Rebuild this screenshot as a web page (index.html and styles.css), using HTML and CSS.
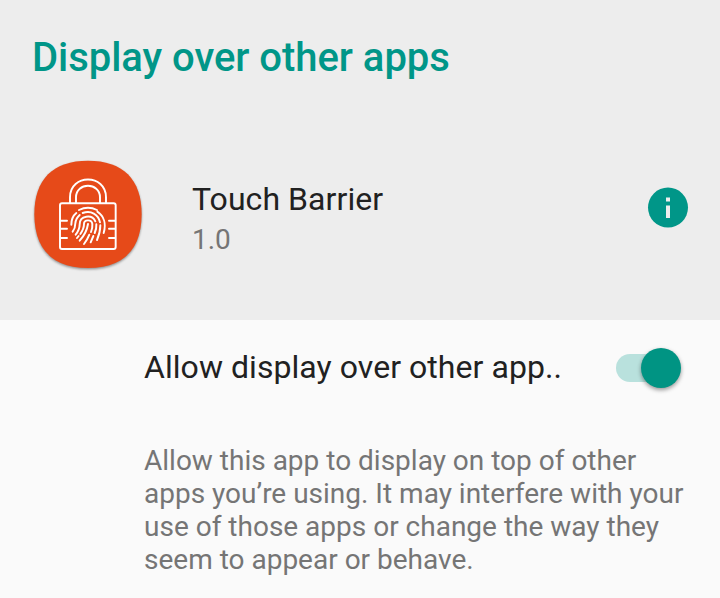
FILE: index.html
```html
<!DOCTYPE html>
<html lang="en">
<head>
<meta charset="utf-8">
<title>Display over other apps</title>
<link rel="stylesheet" href="styles.css">
</head>
<body>
<header class="header">
  <h1 class="title">Display over other apps</h1>
  <div class="app">
    <svg class="app-icon" viewBox="0 0 360 360" aria-hidden="true">
      <path class="tile" d="M180 17C285 17 341 72 341 178C341 284 285 339 180 339C75 339 19 284 19 178C19 72 75 17 180 17Z"/>
      <g class="lines">
        <rect x="96" y="145" width="167" height="137" rx="6"/>
        <path d="M126 144V127C126 56 234 56 234 127V144M144 144V127C144 81 216 81 216 127V144"/>
        <path d="M99 197H117M99 221H117M99 249H117M243 197H261M243 221H261M243 249H261"/>
      </g>
      <g class="print">
        <path d="M153 165Q180 152 207 165"/>
        <path d="M130 209C130 195 135 182 145 174"/>
        <path d="M208 170C228 183 235 207 227 234"/>
        <path d="M134 230Q142 220 142 205C143 194 148 186 155 180"/>
        <path d="M164 174C189 165 211 178 216 202"/>
        <path d="M217 211C217 228 213 241 207 255"/>
        <path d="M143 239Q155 224 155 208C155 181 192 177 202 199"/>
        <path d="M205 208C206 219 203 227 200 234"/>
        <path d="M147 249L152 243M157 237Q168 221 168 207C168 193 191 192 193 207Q194 218 189 231"/>
        <path d="M196 243L188 262"/>
        <path d="M155 257Q176 234 180 207"/>
        <path d="M168 267Q178 254 184 239"/>
      </g>
    </svg>
    <div class="app-text">
      <div class="app-name">Touch Barrier</div>
      <div class="app-version">1.0</div>
    </div>
    <svg class="info" viewBox="0 0 40 40" role="img" aria-label="App info">
      <circle cx="20" cy="19.6" r="20"/>
      <path d="M18 9.6h4v4h-4zM18 17.6h4v12.4h-4z"/>
    </svg>
  </div>
</header>
<main class="settings">
  <div class="setting">
    <span class="setting-label">Allow display over other app..</span>
    <span class="switch" role="switch" aria-checked="true" aria-label="Allow display over other apps"><span class="thumb"></span></span>
  </div>
  <p class="description">Allow this app to display on top of other<br>apps you’re using. It may interfere with your<br>use of those apps or change the way they<br>seem to appear or behave.</p>
</main>
</body>
</html>
```
FILE: styles.css
```css
* { box-sizing: border-box; }

body {
  margin: 0;
  height: 598px;
  overflow: hidden;
  background: #fafafa;
  color: #212121;
  font-family: Roboto, sans-serif;
}

.header {
  height: 320px;
  padding: 34px 32px 0 28px;
  background: #ededed;
}

.title {
  margin: 0 0 0 4px;
  color: #009688;
  font-size: 40px;
  font-weight: 500;
  line-height: 47px;
  letter-spacing: -0.04px;
}

.app {
  display: flex;
  align-items: flex-start;
  margin-top: 74px;
}

.app-icon {
  width: 120px;
  height: 120px;
}

.tile {
  fill: #e64a19;
  filter: drop-shadow(0 4px 3px rgba(0, 0, 0, .4));
}

.lines,
.print {
  fill: none;
  stroke: #fff;
  stroke-width: 5.8;
  stroke-linecap: round;
  stroke-linejoin: round;
}

.app-text {
  flex: 1;
  margin: 24px 0 0 44px;
}

.app-name {
  font-size: 32px;
  line-height: 40px;
  letter-spacing: 0.06px;
}

.app-version {
  margin-top: 4px;
  color: #757575;
  font-size: 28px;
  line-height: 33px;
}

.info {
  width: 40px;
  height: 40px;
  margin-top: 33px;
  overflow: visible;
}

.info circle { fill: #009688; }
.info path { fill: #ededed; }

.settings { padding: 27px 32px 0 144px; }

.setting {
  display: flex;
  justify-content: space-between;
  align-items: center;
  height: 40px;
}

.setting-label {
  font-size: 32px;
  line-height: 40px;
  letter-spacing: 0.05px;
  white-space: nowrap;
}

.switch {
  display: flex;
  justify-content: flex-end;
  align-items: center;
  width: 60px;
  height: 28px;
  margin: 1px 12px 0 0;
  border-radius: 14px;
  background: #b9e1dd;
}

.thumb {
  flex: none;
  width: 40px;
  height: 40px;
  margin-right: -5px;
  border-radius: 50%;
  background: #009483;
  box-shadow: 0 2px 4px rgba(0, 0, 0, .4);
}

.description {
  margin: 57px 0 0;
  color: #757575;
  font-size: 28px;
  line-height: 33px;
  white-space: nowrap;
}
```
